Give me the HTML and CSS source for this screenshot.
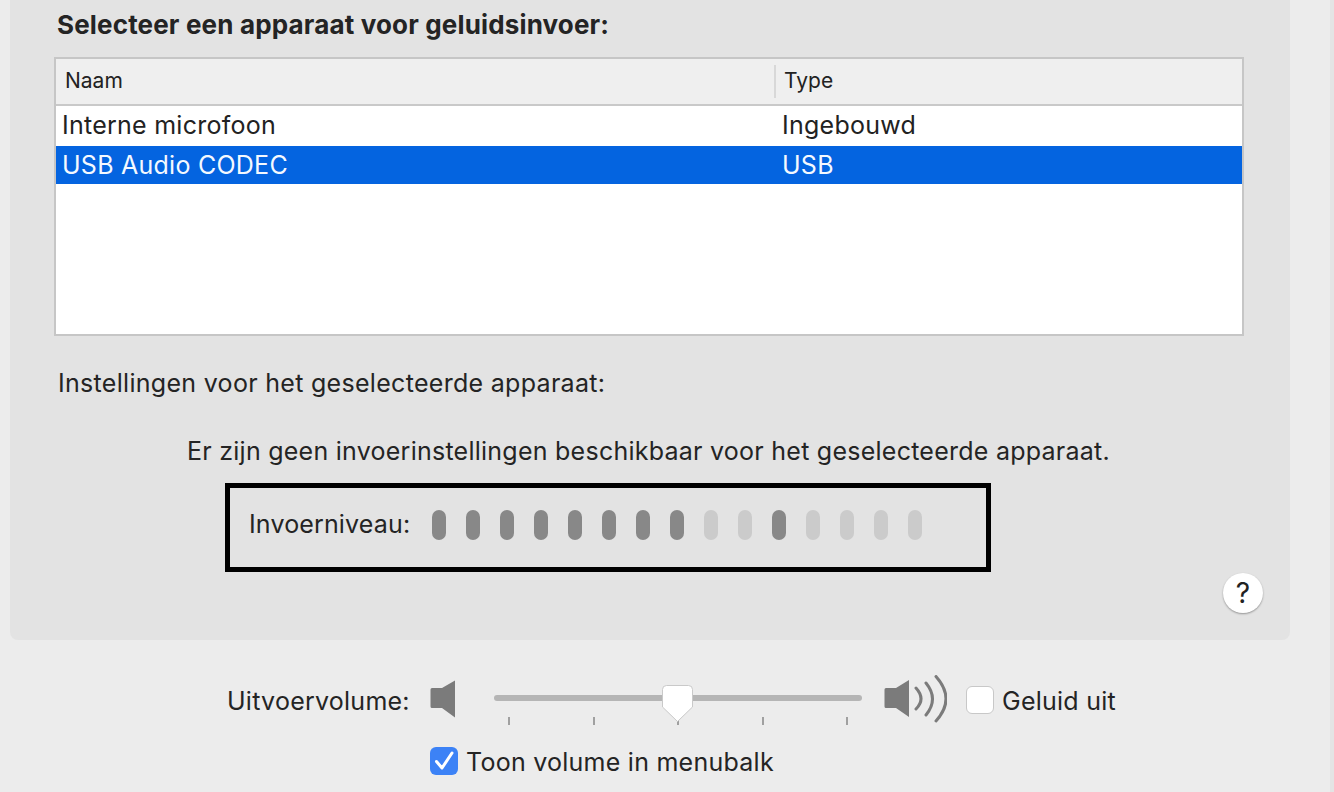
FILE: index.html
```html
<!DOCTYPE html>
<html lang="nl">
<head>
    <meta charset="UTF-8">
    <title>Geluid</title>
    <link rel="stylesheet" href="styles.css">
</head>
<body>
    <div class="window">
        <div class="panel">
            <h2 class="panel-title">Selecteer een apparaat voor geluidsinvoer:</h2>
            <div class="device-table">
                <div class="row head">
                    <div class="col-name">Naam</div>
                    <div class="col-type">Type</div>
                </div>
                <div class="row item">
                    <div class="col-name">Interne microfoon</div>
                    <div class="col-type">Ingebouwd</div>
                </div>
                <div class="row item selected">
                    <div class="col-name">USB Audio CODEC</div>
                    <div class="col-type">USB</div>
                </div>
            </div>
            <p class="settings-label">Instellingen voor het geselecteerde apparaat:</p>
            <p class="no-settings">Er zijn geen invoerinstellingen beschikbaar voor het geselecteerde apparaat.</p>
            <div class="level-box">
                <span class="level-label">Invoerniveau:</span>
                <div class="level-pills">
                    <i class="pill on"></i>
                    <i class="pill on"></i>
                    <i class="pill on"></i>
                    <i class="pill on"></i>
                    <i class="pill on"></i>
                    <i class="pill on"></i>
                    <i class="pill on"></i>
                    <i class="pill on"></i>
                    <i class="pill"></i>
                    <i class="pill"></i>
                    <i class="pill on"></i>
                    <i class="pill"></i>
                    <i class="pill"></i>
                    <i class="pill"></i>
                    <i class="pill"></i>
                </div>
            </div>
            <div class="help-row">
                <button type="button" class="help">?</button>
            </div>
        </div>

        <div class="volume-row">
            <span class="volume-label">Uitvoervolume:</span>
            <svg class="speaker-low" width="26" height="38" viewBox="0 0 26 38">
                <path d="M2 8H12L25 0.5V37.500L12 28H2Q0.500 28 0.500 26.500V9.500Q0.500 8 2 8Z" fill="#7b7b7b"/>
            </svg>
            <div class="slider">
                <div class="track"></div>
                <div class="ticks"><i></i><i></i><i></i><i></i><i></i></div>
                <svg class="thumb" width="33" height="40" viewBox="0 0 33 40">
                    <path d="M5.500 1.500H27.500Q31.500 1.500 31.500 5.500V23L16.500 37.500L1.500 23V5.500Q1.500 1.500 5.500 1.500Z" fill="#fff" stroke="#c9c9c9" stroke-width="1"/>
                </svg>
            </div>
            <svg class="speaker-high" width="63" height="48" viewBox="0 0 63 48">
                <path d="M2 13H12L25 5V42L12 33H2Q0.500 33 0.500 31.500V14.500Q0.500 13 2 13Z" fill="#7b7b7b"/>
                <path d="M32 13Q42 24 32 34M42 8Q55 24 42 40M52 1.500Q72 24 52 46" fill="none" stroke="#7b7b7b" stroke-width="3" stroke-linecap="round"/>
            </svg>
            <span class="checkbox"></span>
            <span class="mute-label">Geluid uit</span>
        </div>
        <div class="menubar-row">
            <span class="checkbox checked">
                <svg width="28" height="28" viewBox="0 0 28 28">
                    <path d="M6.500 14.500L12 21L22 6" fill="none" stroke="#fff" stroke-width="3" stroke-linecap="round" stroke-linejoin="round"/>
                </svg>
            </span>
            <span class="menubar-label">Toon volume in menubalk</span>
        </div>
    </div>
</body>
</html>
```

FILE: styles.css
```css
* {
    box-sizing: border-box;
}
html, body {
    margin: 0;
    height: 100%;
    overflow: hidden;
}
body {
    font-family: Inter, "Liberation Sans", sans-serif;
    font-size: 25px;
    letter-spacing: 0.25px;
    color: #242424;
    background: #ececec;
}
.window {
    height: 792px;
    padding-left: 10px;
    border-right: 4px solid #e4e4e4;
}
.panel {
    width: 1280px;
    height: 640px;
    padding: 0 46px;
    background: #e3e3e3;
    border-radius: 0 0 8px 8px;
}
.panel-title {
    margin: 0;
    padding: 10px 0 0 1px;
    height: 57px;
    font-size: 26px;
    letter-spacing: 0.16px;
    line-height: 30px;
    font-weight: 700;
}
.device-table {
    width: 1190px;
    height: 279px;
    background: #fff;
    border: 2px solid #c6c6c6;
    margin-left: -2px;
}
.row {
    display: flex;
    color: #222;
}
.col-name {
    width: 718px;
    padding-left: 6px;
}
.col-type {
    flex: 1;
    padding-left: 8px;
}
.head {
    height: 47px;
    background: #efefef;
    border-bottom: 2px solid #c9c9c9;
    font-size: 21px;
    letter-spacing: 0;
    line-height: 44px;
}
.head .col-name {
    padding-left: 9px;
}
.head .col-type {
    padding-left: 10px;
    position: relative;
}
.head .col-type::before {
    content: "";
    position: absolute;
    left: 0;
    top: 6px;
    height: 33px;
    width: 2px;
    background: #d8d8d8;
}
.item {
    height: 40px;
    line-height: 38px;
}
.selected {
    height: 38px;
    line-height: 38px;
    background: #0464e0;
    color: #f4f9ff;
}
.settings-label {
    margin: 0;
    padding: 32px 0 0 2px;
    line-height: 30px;
    letter-spacing: 0.3px;
}
.no-settings {
    margin: 0;
    padding-top: 38px;
    line-height: 30px;
    width: 1185px;
    text-align: center;
}
.level-box {
    display: flex;
    align-items: center;
    width: 766px;
    height: 89px;
    margin: 17px 0 0 169px;
    padding: 0 0 8px 19px;
    border: 5px solid #000;
}
.level-label {
    width: 183px;
    letter-spacing: 0.15px;
}
.level-pills {
    display: flex;
    gap: 20px;
    padding-top: 2px;
}
.pill {
    display: block;
    width: 14px;
    height: 30px;
    border-radius: 7px;
    background: #cbcbcb;
}
.pill.on {
    background: #888;
}
.help-row {
    display: flex;
    justify-content: flex-end;
    margin: 1px 0 0;
}
.help {
    width: 40px;
    height: 40px;
    margin-right: -19px;
    padding: 0;
    border: none;
    border-radius: 50%;
    background: #fff;
    box-shadow: 0 1px 2px rgba(0,0,0,0.35);
    font-family: inherit;
    font-size: 28px;
    color: #222;
}
.volume-row {
    display: flex;
    align-items: center;
    height: 60px;
    margin-top: 31px;
    padding-left: 217px;
}
.volume-label {
    width: 203px;
}
.speaker-low {
    margin: -4px 38px 0 0;
}
.slider {
    position: relative;
    width: 368px;
    height: 40px;
}
.track {
    height: 6px;
    margin-top: 14px;
    background: #b5b5b5;
    border-radius: 3px;
}
.ticks {
    display: flex;
    justify-content: space-between;
    padding: 16px 14px 0;
}
.ticks i {
    display: block;
    width: 2px;
    height: 8px;
    background: #a0a0a0;
}
.thumb {
    position: absolute;
    left: 167px;
    top: 3px;
}
.speaker-high {
    margin: -4px 19px 0 22px;
}
.checkbox {
    display: block;
    flex: none;
    width: 28px;
    height: 28px;
    background: #fff;
    border: 1px solid #c8c8c8;
    border-radius: 6px;
}
.volume-row .checkbox {
    margin-top: -2px;
}
.mute-label {
    margin-left: 8px;
}
.menubar-row {
    display: flex;
    align-items: center;
    margin-top: 13px;
    padding-left: 420px;
}
.checkbox.checked {
    background: #3c82f6;
    border: none;
}
.checkbox svg {
    display: block;
}
.menubar-label {
    margin-left: 8px;
    padding-top: 3px;
}
```
